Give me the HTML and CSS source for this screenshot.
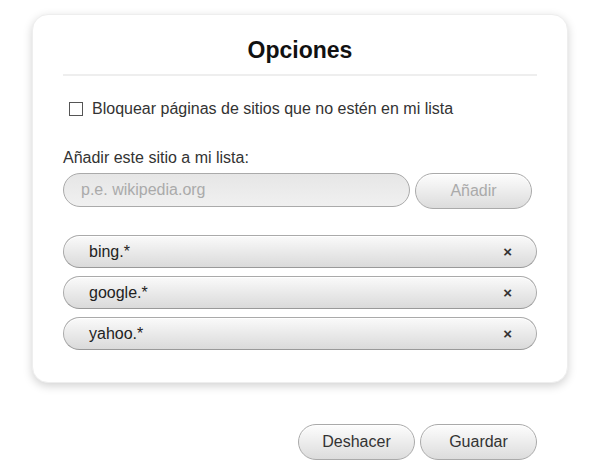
FILE: index.html
```html
<!DOCTYPE html>
<html>
<head>
	<meta charset="utf-8">
	<title>Opciones</title>
	<link rel="stylesheet" href="styles.css">
</head>
<body>
	<div class="options-card">
		<h1 class="title">Opciones</h1>

		<label class="block-row">
			<input type="checkbox" id="block-check">
			<span>Bloquear páginas de sitios que no estén en mi lista</span>
		</label>

		<div class="add-label">Añadir este sitio a mi lista:</div>
		<div class="add-row">
			<input type="text" class="site-input" placeholder="p.e. wikipedia.org">
			<button class="pill-btn add-btn" disabled>Añadir</button>
		</div>

		<ul class="site-list">
			<li><span>bing.*</span><span class="remove">&times;</span></li>
			<li><span>google.*</span><span class="remove">&times;</span></li>
			<li><span>yahoo.*</span><span class="remove">&times;</span></li>
		</ul>
	</div>

	<div class="footer">
		<button class="pill-btn">Deshacer</button>
		<button class="pill-btn">Guardar</button>
	</div>
</body>
</html>
```

FILE: styles.css
```css
body {
	margin: 0;
	padding-top: 14px;
	background: #fff;
	font-family: "Liberation Sans", Arial, sans-serif;
	font-size: 16px;
	color: #333;
}

.options-card {
	width: 474px;
	margin: 0 auto;
	padding: 22px 30px 32px;
	border: 1px solid #eee;
	border-radius: 16px;
	box-shadow: 0 3px 10px rgba(0, 0, 0, 0.18);
	background: #fff;
}

.title {
	margin: 0;
	height: 26px;
	line-height: 26px;
	padding-bottom: 11px;
	border-bottom: 2px solid #eee;
	text-align: center;
	font-size: 23px;
	font-weight: bold;
	color: #111;
}

.block-row {
	display: flex;
	align-items: center;
	margin-top: 24px;
	margin-left: 6px;
	height: 18px;
	line-height: 18px;
}

.block-row input {
	appearance: none;
	box-sizing: border-box;
	width: 14px;
	height: 14px;
	margin: 0 9px 0 0;
	border: 1px solid #555;
	background: #fff;
}

.add-label {
	margin-top: 31px;
	line-height: 18px;
}

.add-row {
	display: flex;
	align-items: flex-start;
	gap: 5px;
	margin-top: 6px;
}

.site-input {
	box-sizing: border-box;
	width: 347px;
	height: 34px;
	padding: 0 17px;
	border: 1px solid #aaa;
	border-radius: 17px;
	background: linear-gradient(#e6e6e6, #f0f0f0);
	font-family: inherit;
	font-size: 16px;
	color: #333;
	outline: none;
}

.site-input::placeholder {
	color: #aaa;
}

.pill-btn {
	box-sizing: border-box;
	width: 117px;
	height: 36px;
	border: 1px solid #aaa;
	border-radius: 18px;
	background: linear-gradient(#fdfdfd, #dcdcdc);
	box-shadow: inset 0 1px 0 #fff;
	font-family: inherit;
	font-size: 16px;
	color: #333;
	cursor: pointer;
}

.add-btn {
	color: #aaa;
	cursor: default;
}

.site-list {
	list-style: none;
	margin: 26px 0 0;
	padding: 0;
	display: flex;
	flex-direction: column;
	gap: 8px;
}

.site-list li {
	box-sizing: border-box;
	display: flex;
	justify-content: space-between;
	align-items: center;
	height: 33px;
	padding: 0 24px 0 25px;
	border: 1px solid #aaa;
	border-bottom-color: #999;
	border-radius: 17px;
	background: linear-gradient(#fafafa, #dadada);
	box-shadow: inset 0 1px 0 #fff;
	color: #222;
}

.remove {
	font-size: 15px;
	font-weight: bold;
	color: #333;
	cursor: pointer;
}

.footer {
	width: 474px;
	margin: 41px auto 0;
	display: flex;
	justify-content: flex-end;
	gap: 5px;
}
```
